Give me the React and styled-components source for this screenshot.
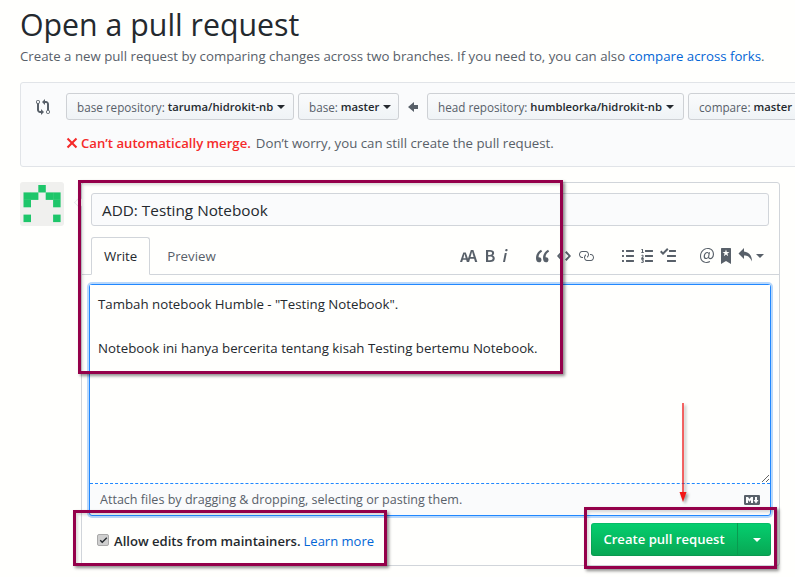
import React from "react";
import styled, { createGlobalStyle } from "styled-components";

const Global = createGlobalStyle`
  html, body {
    margin: 0;
    background: #fffffd;
    overflow: hidden;
  }
  body {
    font-family: "Open Sans", "Noto Sans", sans-serif;
    font-size: 13.28px;
    color: #24292e;
  }
`;

const Page = styled.div`
  position: relative;
  width: 795px;
  height: 577px;
  overflow: hidden;
  padding: 5px 0 0 20px;
  box-sizing: border-box;
`;

const Title = styled.h1`
  margin: 0;
  font-size: 30.3px;
  font-weight: 400;
  line-height: 40px;
`;

const Subtitle = styled.p`
  margin: 0;
  font-size: 13.24px;
  line-height: 22px;
  color: #586069;
  white-space: nowrap;
`;

const Link = styled.a`
  color: #0366d6;
`;

const CompareBox = styled.div`
  margin-top: 15px;
  width: 800px;
  height: 85px;
  box-sizing: border-box;
  background: #fafbfc;
  border: 1px solid #e1e4e8;
  border-radius: 3px;
  padding: 10px 0 0 15px;
`;

const BranchRow = styled.div`
  display: flex;
  align-items: center;
  white-space: nowrap;
`;

const Branch = styled.div`
  flex: none;
  display: flex;
  align-items: center;
  box-sizing: border-box;
  width: ${(p) => p.$width}px;
  height: 27px;
  margin-right: 4px;
  padding-left: 10px;
  font-size: 11.25px;
  font-weight: 600;
  color: #24292e;
  background: linear-gradient(#fafbfc, #eff3f6);
  border: 1px solid #ced1d5;
  border-radius: 3px;
`;

const BranchLabel = styled.span`
  color: #586069;
  font-size: 11.7px;
  font-weight: 400;
  margin-right: 3px;
`;

const Caret = styled.span`
  display: inline-block;
  flex: none;
  margin-left: 4px;
  border: 4px solid transparent;
  border-top-color: ${(p) => p.$color || "#24292e"};
  border-bottom: 0;
`;

const Icon = styled.svg`
  flex: none;
  display: block;
  fill: ${(p) => p.$color || "#586069"};
`;

const RowIcon = styled(Icon)`
  margin-right: 16px;
`;

const ArrowIcon = styled(Icon)`
  margin: 0 9px 0 5px;
`;

const MergeRow = styled.div`
  display: flex;
  align-items: center;
  margin: 12px 0 0 30px;
  line-height: 22px;
  font-size: 13.25px;
  color: #586069;
  white-space: nowrap;
`;

const MergeError = styled.strong`
  color: #f52a2a;
  font-size: 13.15px;
  font-weight: 600;
  margin: 0 5px 0 3px;
`;

const Discussion = styled.div`
  display: flex;
  align-items: flex-start;
  margin-top: 15px;
`;

const Avatar = styled.svg`
  flex: none;
  display: block;
  border-radius: 3px;
  background: #f0f0ee;
  margin-right: 17px;
`;

const FormBox = styled.div`
  position: relative;
  width: 699px;
  height: 384px;
  box-sizing: border-box;
  padding-top: 10px;
  border: 1px solid #d1d5da;
  border-radius: 3px;

  &::before {
    content: "";
    position: absolute;
    left: -8px;
    top: 14px;
    width: 10px;
    height: 10px;
    background: #fffffd;
    border-left: 1px solid #e1e4e8;
    border-bottom: 1px solid #e1e4e8;
    transform: rotate(45deg) scale(0.7);
  }
`;

const TitleInput = styled.div`
  margin: 0 10px 0 9px;
  height: 33px;
  box-sizing: border-box;
  padding-left: 10px;
  background: #fafbfc;
  border: 1px solid #d1d5da;
  border-radius: 3px;
  font-size: 15.3px;
  line-height: 33px;
`;

const TabBar = styled.div`
  display: flex;
  align-items: flex-end;
  margin-top: 11px;
  height: 37px;
  padding-left: 9px;
  border-bottom: 1px solid #d1d5da;
`;

const Tab = styled.div`
  box-sizing: border-box;
  height: 38px;
  margin-bottom: -1px;
  padding: 0 ${(p) => (p.$active ? 12 : 16)}px;
  line-height: 37px;
  color: ${(p) => (p.$active ? "#24292e" : "#586069")};
  background: ${(p) => (p.$active ? "#fffffd" : "transparent")};
  border: 1px solid ${(p) => (p.$active ? "#d1d5da" : "transparent")};
  border-bottom-color: ${(p) => (p.$active ? "#fffffd" : "transparent")};
  border-radius: 3px 3px 0 0;
`;

const Toolbar = styled.div`
  display: flex;
  align-items: center;
  margin-left: auto;
  height: 37px;
  padding-right: 15px;
`;

const ToolGroup = styled.div`
  display: flex;
  align-items: center;
  gap: ${(p) => p.$gap}px;
  margin-left: ${(p) => p.$left}px;
`;

const Editor = styled.div`
  margin: 9px 8px 0 7px;
  height: 232px;
  box-sizing: border-box;
  display: flex;
  flex-direction: column;
  background: #fafbfc;
  border: 1px solid #2188ff;
  border-radius: 3px;
  box-shadow: 0 0 0 2px #b9d8fb;
`;

const TextArea = styled.textarea`
  display: block;
  width: 100%;
  height: 199px;
  flex: none;
  box-sizing: border-box;
  margin: 0;
  padding: 8px;
  border: 0;
  border-bottom: 1px dashed #2188ff;
  outline: 0;
  resize: vertical;
  overflow: hidden;
  background: #fffffd;
  color: #24292e;
  font: inherit;
  line-height: 22px;
`;

const DropBar = styled.div`
  flex: 1;
  display: flex;
  align-items: center;
  justify-content: space-between;
  padding: 0 10px;
  font-size: 12.55px;
  color: #586069;
`;

const Footer = styled.div`
  display: flex;
  align-items: center;
  justify-content: space-between;
  margin: 7px 8px 0 15px;
`;

const Maintainers = styled.div`
  display: flex;
  align-items: center;
  white-space: nowrap;
  font-size: 13.1px;
`;

const CheckBox = styled.span`
  flex: none;
  display: flex;
  align-items: center;
  justify-content: center;
  width: 10px;
  height: 10px;
  margin-right: 5px;
  background: #cfcfcf;
  border: 1px solid #a9a9a9;
  border-radius: 2px;
`;

const Bold = styled.strong`
  font-weight: 600;
  margin: 3px 3px 0 0;
`;

const MoreLink = styled(Link)`
  margin-top: 3px;
  font-size: 13px;
`;

const SubmitGroup = styled.div`
  display: flex;
  width: 180px;
  height: 33px;
  color: #fff;
  font-size: 13.1px;
  font-weight: 600;
  border-radius: 3px;
  background: linear-gradient(#05cf6f, #08a653);
  box-shadow: inset 0 0 0 1px rgba(27, 31, 35, 0.1);
`;

const SubmitLabel = styled.div`
  flex: 1;
  text-align: center;
  line-height: 33px;
`;

const SubmitMenu = styled.div`
  width: 33px;
  display: flex;
  align-items: center;
  justify-content: center;
  border-left: 1px solid #0a9a50;
`;

const Highlight = styled.div`
  position: absolute;
  left: ${(p) => p.$x}px;
  top: ${(p) => p.$y}px;
  width: ${(p) => p.$w}px;
  height: ${(p) => p.$h}px;
  box-sizing: border-box;
  border: 3px solid #94004a;
  box-shadow: 2px 2px 3px rgba(0, 0, 0, 0.45), inset 2px 2px 3px rgba(0, 0, 0, 0.15);
  pointer-events: none;
`;

const RedArrow = styled.svg`
  position: absolute;
  left: 678px;
  top: 402px;
  filter: drop-shadow(2px 2px 1.5px rgba(0, 0, 0, 0.4));
`;

const paths = {
  compare:
    "M5 12H4c-.27-.02-.48-.11-.69-.31-.21-.2-.3-.42-.31-.69V4.72A1.993 1.993 0 0 0 2 1a1.993 1.993 0 0 0-1 3.72V11c.03.78.34 1.47.94 2.06.6.59 1.28.91 2.06.94h1v2l3-3-3-3v2zM2 1.8c.66 0 1.2.55 1.2 1.2 0 .65-.55 1.2-1.2 1.2C1.35 4.2.8 3.65.8 3c0-.65.55-1.2 1.2-1.2zm11 9.48V5c-.03-.78-.34-1.47-.94-2.06-.6-.59-1.28-.91-2.06-.94H9V0L6 3l3 3V4h1c.27.02.48.11.69.31.21.2.3.42.31.69v6.28A1.993 1.993 0 0 0 12 15a1.993 1.993 0 0 0 1-3.72zm-1 2.92c-.66 0-1.2-.55-1.2-1.2 0-.65.55-1.2 1.2-1.2.65 0 1.2.55 1.2 1.2 0 .65-.55 1.2-1.2 1.2z",
  arrowLeft: "M6 3L0 8l6 5v-3h4V6H6V3z",
  x: "M7.48 8l3.75 3.75-1.48 1.48L6 9.48l-3.75 3.75-1.48-1.48L4.52 8 .77 4.25l1.48-1.48L6 6.52l3.75-3.75 1.48 1.48L7.48 8z",
  textSize:
    "M13.62 9.08L12.1 3.66h-.06l-1.5 5.42h3.08zM5.7 10.13S4.68 6.52 4.53 6.02h-.08l-1.13 4.11H5.7zM17.31 14h-2.25l-.95-3.25h-4.07L9.09 14H6.84l-.69-2.33H2.87L2.17 14H0l3.3-9.59h2.5l2.17 6.34L10.86 2h2.52l3.94 12h-.01z",
  bold: "M1 2h3.83c2.48 0 4.3.75 4.3 2.95 0 1.14-.63 2.23-1.67 2.61v.06c1.33.3 2.3 1.23 2.3 2.86 0 2.39-1.97 3.52-4.61 3.52H1V2zm3.66 4.95c1.67 0 2.38-.66 2.38-1.69 0-1.17-.78-1.61-2.34-1.61H3.13v3.3h1.53zm.27 5.39c1.77 0 2.75-.64 2.75-1.98 0-1.27-.95-1.81-2.75-1.81h-1.8v3.8h1.8v-.01z",
  italic: "M2.81 5h1.98L3 14H1l1.81-9zm.36-2.7c0-.7.58-1.3 1.33-1.3.56 0 1.13.38 1.13 1.03 0 .75-.59 1.3-1.33 1.3-.58 0-1.13-.38-1.13-1.03z",
  quote:
    "M6.16 3.5C3.73 5.06 2.55 6.67 2.55 9.36c.16-.05.3-.05.44-.05 1.27 0 2.5.86 2.5 2.41 0 1.61-1.03 2.61-2.5 2.61-1.9 0-2.99-1.52-2.99-4.25 0-3.8 1.75-6.53 5.02-8.42L6.16 3.5zm7 0c-2.43 1.56-3.61 3.17-3.61 5.86.16-.05.3-.05.44-.05 1.27 0 2.5.86 2.5 2.41 0 1.61-1.03 2.61-2.5 2.61-1.89 0-2.98-1.52-2.98-4.25 0-3.8 1.75-6.53 5.02-8.42l1.14 1.84h-.01z",
  code: "M9.5 3L8 4.5 11.5 8 8 11.5 9.5 13 14 8 9.5 3zm-5 0L0 8l4.5 5L6 11.5 2.5 8 6 4.5 4.5 3z",
  link: "M4 9h1v1H4c-1.5 0-3-1.69-3-3.5S2.55 3 4 3h4c1.45 0 3 1.69 3 3.5 0 1.41-.91 2.72-2 3.25V8.59c.58-.45 1-1.27 1-2.09C10 5.22 8.98 4 8 4H4c-.98 0-2 1.22-2 2.5S3 9 4 9zm9-3h-1v1h1c1 0 2 1.22 2 2.5S13.98 12 13 12H9c-.98 0-2-1.22-2-2.5 0-.83.42-1.64 1-2.09V6.25c-1.09.53-2 1.84-2 3.25C6 11.31 7.55 13 9 13h4c1.45 0 3-1.69 3-3.5S14.5 6 13 6z",
  listUnordered:
    "M2 13c0 .59 0 1-.59 1H.59C0 14 0 13.59 0 13c0-.59 0-1 .59-1h.81c.59 0 .59.41.59 1H2zm2.59-9h6.81c.59 0 .59-.41.59-1 0-.59 0-1-.59-1H4.59C4 2 4 2.41 4 3c0 .59 0 1 .59 1zM1.41 7H.59C0 7 0 7.41 0 8c0 .59 0 1 .59 1h.81c.59 0 .59-.41.59-1 0-.59 0-1-.59-1h.01zm0-5H.59C0 2 0 2.41 0 3c0 .59 0 1 .59 1h.81c.59 0 .59-.41.59-1 0-.59 0-1-.59-1h.01zm10 5H4.59C4 7 4 7.41 4 8c0 .59 0 1 .59 1h6.81c.59 0 .59-.41.59-1 0-.59 0-1-.59-1h.01zm0 5H4.59C4 12 4 12.41 4 13c0 .59 0 1 .59 1h6.81c.59 0 .59-.41.59-1 0-.59 0-1-.59-1h.01z",
  listOrdered:
    "M12.01 13c0 .59 0 1-.59 1H4.6c-.59 0-.59-.41-.59-1 0-.59 0-1 .59-1h6.81c.59 0 .59.41.59 1h.01zM4.6 4h6.81C12 4 12 3.59 12 3c0-.59 0-1-.59-1H4.6c-.59 0-.59.41-.59 1 0 .59 0 1 .59 1zm6.81 3H4.6c-.59 0-.59.41-.59 1 0 .59 0 1 .59 1h6.81C12 9 12 8.59 12 8c0-.59 0-1-.59-1zm-9.4-6h-.72c-.3.19-.58.25-1.03.34V2h.75v2.14H.17V5h2.84v-.86h-1V1zm.19 8.75c-.17 0-.42.02-.61.05.48-.5 1.03-1.16 1.03-1.78C2.6 7.26 2.08 6.76 1.3 6.76c-.56 0-.92.19-1.3.59l.48.5c.19-.19.41-.38.67-.38.28 0 .47.17.47.5 0 .53-.7 1.2-1.62 2.11v.59H3v-.92H2.2zm-.08 3.11v-.02c.44-.19.64-.47.64-.86 0-.7-.56-1.11-1.44-1.11-.48 0-.89.19-1.28.52l.55.64c.25-.2.44-.31.69-.31.27 0 .42.13.42.36 0 .27-.2.44-.86.44v.75c.83 0 .98.17.98.47 0 .25-.23.38-.58.38-.28 0-.56-.14-.81-.38l-.48.66c.3.36.77.56 1.41.56.83 0 1.53-.41 1.53-1.16 0-.5-.31-.81-.77-.94v-.01z",
  taskList:
    "M15.41 9H7.59C7 9 7 8.59 7 8c0-.59 0-1 .59-1h7.81c.59 0 .59.41.59 1 0 .59 0 1-.59 1h.01zM9.59 4C9 4 9 3.59 9 3c0-.59 0-1 .59-1h5.81c.59 0 .59.41.59 1 0 .59 0 1-.59 1H9.59zM0 3.91l1.41-1.3L3 4.2 7.09 0 8.5 1.41 3 6.91l-3-3zM7.59 12h7.81c.59 0 .59.41.59 1 0 .59 0 1-.59 1H7.59C7 14 7 13.59 7 13c0-.59 0-1 .59-1z",
  mention:
    "M6.58 15c1.25 0 2.52-.31 3.56-.94l-.42-.94c-.84.52-1.89.83-3.03.83-3.23 0-5.64-2.08-5.64-5.72 0-4.37 3.23-7.18 6.58-7.18 3.45 0 5.22 2.19 5.22 5.2 0 2.39-1.34 3.86-2.5 3.86-1.05 0-1.36-.73-1.05-2.19l.73-3.75H8.98l-.11.72c-.41-.63-.94-.83-1.56-.83-2.19 0-3.66 2.39-3.66 4.38 0 1.67.94 2.61 2.3 2.61.84 0 1.67-.53 2.3-1.25.11.94.94 1.45 1.98 1.45 1.67 0 3.77-1.67 3.77-5C14 2.61 11.59 0 7.83 0 3.66 0 0 3.33 0 8.33 0 12.71 2.92 15 6.58 15zm-.31-5c-.73 0-1.36-.52-1.36-1.67 0-1.45.94-3.22 2.41-3.22.52 0 .84.2 1.25.83l-.52 3.02c-.63.73-1.16 1.05-1.78 1.05V10z",
  bookmark:
    "M9 0H1C.27 0 0 .27 0 1v15l5-3.09L10 16V1c0-.73-.27-1-1-1zm-.78 4.25L6.36 5.61l.72 2.16c.06.22-.02.28-.2.17L5 6.6 3.12 7.94c-.19.11-.25.05-.2-.17l.72-2.16-1.86-1.36c-.17-.16-.14-.23.09-.23l2.3-.03.7-2.16h.25l.7 2.16 2.3.03c.23 0 .27.08.09.23h.01z",
  reply: "M6 3.5c3.92.44 8 3.125 8 10-2.312-5.062-4.75-6-8-6V11L.5 5.5 6 0v3.5z",
  markdown:
    "M14.85 3H1.15C.52 3 0 3.52 0 4.15v7.69C0 12.48.52 13 1.15 13h13.69c.64 0 1.15-.52 1.15-1.15v-7.7C16 3.52 15.48 3 14.85 3zM9 11H7V8L5.5 9.92 4 8v3H2V5h2l1.5 2L7 5h2v6zm2.99.5L9.5 8H11V5h2v3h1.5l-2.51 3.5z",
  check: "M12 5l-8 8-4-4 1.5-1.5L4 10l6.5-6.5L12 5z",
};

const Octicon = ({ name, w, as: Comp = Icon, color }) => (
  <Comp as="svg" width={w} height={16} viewBox={`0 0 ${w} 16`} $color={color}>
    <path fillRule="evenodd" d={paths[name]} />
  </Comp>
);

// 5x5 identicon cells: [col, row]
const avatarCells = [
  [2, 0],
  [0, 1],
  [1, 1],
  [3, 1],
  [4, 1],
  [0, 2],
  [4, 2],
  [0, 4],
  [4, 4],
];

const highlights = [
  { x: 78, y: 180, w: 485, h: 194 },
  { x: 73, y: 510, w: 314, h: 56 },
  { x: 584, y: 507, w: 193, h: 62 },
];

const App = () => (
  <Page>
    <Global />
    <Title>Open a pull request</Title>
    <Subtitle>
      Create a new pull request by comparing changes across two branches. If you need to, you can
      also <Link>compare across forks</Link>.
    </Subtitle>

    <CompareBox>
      <BranchRow>
        <Octicon name="compare" w={14} as={RowIcon} />
        <Branch $width={228}>
          <BranchLabel>base repository:</BranchLabel>taruma/hidrokit-nb
          <Caret />
        </Branch>
        <Branch $width={101}>
          <BranchLabel>base:</BranchLabel>master
          <Caret />
        </Branch>
        <Octicon name="arrowLeft" w={10} as={ArrowIcon} />
        <Branch $width={257}>
          <BranchLabel>head repository:</BranchLabel>humbleorka/hidrokit-nb
          <Caret />
        </Branch>
        <Branch $width={124}>
          <BranchLabel>compare:</BranchLabel>master
          <Caret />
        </Branch>
      </BranchRow>
      <MergeRow>
        <Octicon name="x" w={12} color="#f52a2a" />
        <MergeError>Can’t automatically merge.</MergeError>
        Don’t worry, you can still create the pull request.
      </MergeRow>
    </CompareBox>

    <Discussion>
      <Avatar width="44" height="44" viewBox="0 0 44 44">
        {avatarCells.map(([c, r]) => (
          <rect key={`${c}-${r}`} x={3.5 + c * 7.4} y={3 + r * 7.4} width="7.5" height="7.5" fill="#1ec66a" />
        ))}
      </Avatar>
      <FormBox>
        <TitleInput>ADD: Testing Notebook</TitleInput>
        <TabBar>
          <Tab $active>Write</Tab>
          <Tab>Preview</Tab>
          <Toolbar>
            <ToolGroup $gap={7} $left={0}>
              <Octicon name="textSize" w={18} />
              <Octicon name="bold" w={10} />
              <Octicon name="italic" w={6} />
            </ToolGroup>
            <ToolGroup $gap={7} $left={28}>
              <Octicon name="quote" w={14} />
              <Octicon name="code" w={14} />
              <Octicon name="link" w={16} />
            </ToolGroup>
            <ToolGroup $gap={7} $left={28}>
              <Octicon name="listUnordered" w={12} />
              <Octicon name="listOrdered" w={12} />
              <Octicon name="taskList" w={16} />
            </ToolGroup>
            <ToolGroup $gap={7} $left={24}>
              <Octicon name="mention" w={14} />
              <Octicon name="bookmark" w={10} />
              <Octicon name="reply" w={14} />
            </ToolGroup>
            <Caret $color="#586069" />
          </Toolbar>
        </TabBar>
        <Editor>
          <TextArea
            readOnly
            defaultValue={'Tambah notebook Humble - "Testing Notebook".\n\nNotebook ini hanya bercerita tentang kisah Testing bertemu Notebook.'}
          />
          <DropBar>
            Attach files by dragging &amp; dropping, selecting or pasting them.
            <Octicon name="markdown" w={16} />
          </DropBar>
        </Editor>
        <Footer>
          <Maintainers>
            <CheckBox>
              <svg width="9" height="10" viewBox="0 0 12 16" fill="#24292e">
                <path d={paths.check} />
              </svg>
            </CheckBox>
            <Bold>Allow edits from maintainers.</Bold>
            <MoreLink>Learn more</MoreLink>
          </Maintainers>
          <SubmitGroup>
            <SubmitLabel>Create pull request</SubmitLabel>
            <SubmitMenu>
              <Caret $color="#fff" />
            </SubmitMenu>
          </SubmitGroup>
        </Footer>
      </FormBox>
    </Discussion>

    {highlights.map((h) => (
      <Highlight key={h.x} $x={h.x} $y={h.y} $w={h.w} $h={h.h} />
    ))}
    <RedArrow width="10" height="102" viewBox="0 0 10 102">
      <path d="M5 1V92" stroke="#f21414" strokeWidth="1.3" fill="none" />
      <path d="M1.5 90H8.5L5 100Z" fill="#f21414" />
    </RedArrow>
  </Page>
);

export default App;
